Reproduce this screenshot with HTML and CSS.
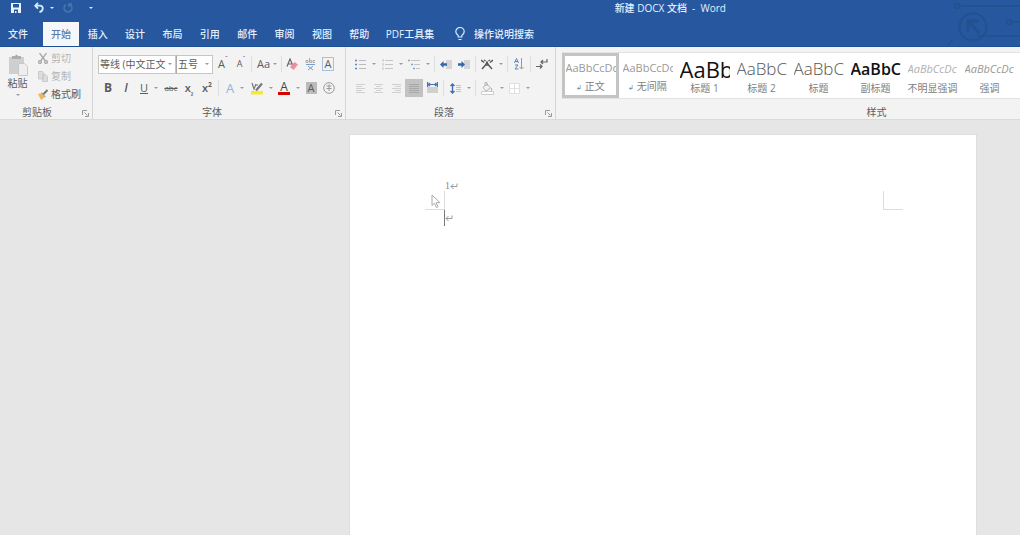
FILE: index.html
```
<!DOCTYPE html>
<html lang="zh-CN">
<head>
<meta charset="utf-8">
<title>新建 DOCX 文档 - Word</title>
<link rel="stylesheet" href="styles.css">
</head>
<body>
<div class="app">
<header class="top">
  <svg class="circuit" width="72" height="46" viewBox="0 0 72 46" fill="none" stroke="#23508e" stroke-width="1.5"><circle cx="9" cy="6" r="2.5"/><path d="M12 6h60M0 45l5-5M64 22h8M30 36h42" /><circle cx="61" cy="22" r="2.5"/><circle cx="25" cy="27" r="13.5" stroke-width="2"/><path d="M20 32V21h11M20 21l11 12" stroke-width="3"/></svg>
  <div class="titlebar">
    <div class="quick">
      <button class="qb" aria-label="保存"><svg width="10" height="10" viewBox="0 0 10 10"><path fill="#e8f4ff" fill-rule="evenodd" d="M0 0h10v10H0zM2 1v3.500h6V1zM3 6.500V10h1V8h1.500v2H7V6.500z"/></svg></button>
      <button class="qb undo" aria-label="撤消"><svg width="10" height="11" viewBox="0 0 10 11" fill="none" stroke="#d5ecff" stroke-width="1.800"><path d="M4 .8L1.200 3.700 4 6.600M1.500 3.700H6c4 0 3.500 5.500-.5 6.300"/></svg></button>
      <button class="qb narrow" aria-label="撤消选项"><i class="caret light"></i></button>
      <button class="qb redo" aria-label="重复"><svg width="10" height="10" viewBox="0 0 10 10" fill="none" stroke="#4b75b2" stroke-width="1.500"><path d="M3 1.500a4 4 0 1 0 4 0M6 4V1h3"/></svg></button>
      <button class="qb more" aria-label="自定义"><i class="caret light"></i></button>
    </div>
    <h1 class="doc-title">新建 DOCX 文档&nbsp; -&nbsp; Word</h1>
  </div>
  <nav class="tabs">
    <button class="tab file">文件</button>
    <button class="tab active">开始</button>
    <div class="tab-set">
      <button class="tab">插入</button><button class="tab">设计</button><button class="tab">布局</button><button class="tab">引用</button><button class="tab">邮件</button><button class="tab">审阅</button><button class="tab">视图</button><button class="tab">帮助</button>
    </div>
    <button class="tab pdf">PDF工具集</button>
    <button class="tab tell"><svg width="10" height="14" viewBox="0 0 10 14" fill="none" stroke="#d5ecff" stroke-width="1.200"><path d="M3.200 10V8.500C2 7.500.8 6.500.8 4.700a4.200 4.200 0 0 1 8.400 0c0 1.800-1.200 2.800-2.400 3.800V10zM3.500 12.500h3"/></svg>操作说明搜索</button>
  </nav>
</header>

<main class="ribbon">
  <section class="group clip">
    <div class="clip-body">
      <button class="paste"><svg width="20" height="22" viewBox="0 0 20 22"><path fill="#cfcfcf" d="M1 3h15v6h-6v11H1z"/><path fill="#adadad" d="M4 2h3q1.500-3 3 0h3v3H4z"/><path fill="#eee" stroke="#c8c8c8" d="M10.500 9.500h6l3 3v9h-9z"/></svg><span>粘贴</span><i class="caret"></i></button>
      <div class="clip-list">
        <button class="mini off"><svg width="10" height="11" viewBox="0 0 10 11" fill="none" stroke="#a8a8a8" stroke-width="1.300"><path d="M1.500 0l6 8M8.500 0l-6 8"/><circle cx="2" cy="9" r="1.400"/><circle cx="8" cy="9" r="1.400"/></svg>剪切</button>
        <button class="mini off"><svg width="10" height="11" viewBox="0 0 10 11" fill="#ddd" stroke="#cacaca"><path d="M.5.5h4l1 1V8h-5zM4.500 3.500h3l2 2v5h-5z"/></svg>复制</button>
        <button class="mini"><svg width="10" height="11" viewBox="0 0 10 11"><path fill="#f0b65a" d="M0 5l4-1 3 4-4 3z"/><path stroke="#777" stroke-width="2" d="M5 5.500L9.500 1"/><path stroke="#999" d="M3.500 3.500l4 4.500"/></svg>格式刷</button>
      </div>
    </div>
    <footer class="label">剪贴板<button class="launch" aria-label="剪贴板设置"><svg width="7" height="7" viewBox="0 0 7 7" fill="none" stroke="#9a9a9a"><path d="M.5 5V.5H5M2.500 2.500l3 3M6.500 3v3.500H3"/></svg></button></footer>
  </section>

  <section class="group font">
    <div class="row tight">
      <span class="combo face"><select aria-label="字体"><option>等线 (中文正文</option></select><i class="caret"></i></span>
      <span class="combo size"><select aria-label="字号"><option>五号</option></select><i class="caret"></i></span>
      <button class="b" aria-label="增大字号">A<sup>ˆ</sup></button>
      <button class="b small" aria-label="减小字号">A<sup>ˇ</sup></button>
      <i class="sep"></i>
      <button class="b wide aa">Aa<i class="caret"></i></button>
      <i class="sep"></i>
      <button class="b" aria-label="清除格式"><svg width="12" height="13" viewBox="0 0 12 13"><path d="M1 8.500L4 1l3 7M2 6h4" fill="none" stroke="#666" stroke-width="1.200"/><path fill="#ea8fa0" d="M4 9l4.500-5L12 6.500 7.500 12z"/></svg></button>
      <button class="b" aria-label="拼音指南"><svg width="11" height="13" viewBox="0 0 11 13" fill="none"><path stroke="#aaa" d="M1 2.500h2v2H1zM4.500 0v4.500h2v-2h-2M10 2.500H8v2h2"/><path stroke="#7d9cc8" d="M1 6.500h9M3 8l5 4M8 8l-5 4"/></svg></button>
      <button class="b" aria-label="字符边框"><span class="boxed">A</span></button>
    </div>
    <div class="row">
      <button class="b bold">B</button>
      <button class="b ital">I</button>
      <button class="b wide"><u>U</u><i class="caret"></i></button>
      <button class="b strike">abc</button>
      <button class="b bold2" aria-label="下标">x<sub>₂</sub></button>
      <button class="b bold2" aria-label="上标">x²</button>
      <i class="sep"></i>
      <button class="b wide glow">A<i class="caret"></i></button>
      <button class="b wide" aria-label="突出显示"><svg width="12" height="14" viewBox="0 0 12 14"><path fill="#f7e92c" d="M0 10h12v3.500H0z"/><path fill="none" stroke="#777" stroke-width="1.200" d="M1 2l2 6 2-5M4 4h3"/><path stroke="#777" stroke-width="2.200" d="M5 9.500L11 2.500"/></svg><i class="caret"></i></button>
      <button class="b wide"><span class="red">A</span><i class="caret"></i></button>
      <button class="b" aria-label="字符底纹"><span class="shade">A</span></button>
      <button class="b" aria-label="带圈字符"><svg width="12" height="12" viewBox="0 0 12 12" fill="none" stroke="#999"><circle cx="6" cy="6" r="5.300"/><path d="M3.500 4h5M3.500 6.500h5M6 2.500v6.500"/></svg></button>
    </div>
    <footer class="label">字体<button class="launch" aria-label="字体设置"><svg width="7" height="7" viewBox="0 0 7 7" fill="none" stroke="#9a9a9a"><path d="M.5 5V.5H5M2.500 2.500l3 3M6.500 3v3.500H3"/></svg></button></footer>
  </section>

  <section class="group para">
    <div class="row">
      <button class="b wide" aria-label="项目符号"><svg width="11" height="11" viewBox="0 0 11 11"><path stroke="#5b85bd" stroke-width="1.500" d="M0 1.500h2M0 5.500h2M0 9.500h2"/><path stroke="#bbb" d="M4 1.500h7M4 5.500h7M4 9.500h7"/></svg><i class="caret"></i></button>
      <button class="b wide" aria-label="编号"><svg width="11" height="11" viewBox="0 0 11 11"><path stroke="#b4c4d4" d="M1 0v3M1 4v3M1 8v3"/><path stroke="#c6c6c6" d="M3 1.500h8M3 5.500h8M3 9.500h8"/></svg><i class="caret"></i></button>
      <button class="b wide" aria-label="多级列表"><svg width="12" height="11" viewBox="0 0 12 11"><path stroke="#86a3cc" stroke-width="1.400" d="M0 1.500h2M3 5.500h2M5 9.500h2"/><path stroke="#c4c4c4" d="M3 1.500h9M6 5.500h6M8 9.500h4"/></svg><i class="caret"></i></button>
      <i class="sep"></i>
      <button class="b" aria-label="减少缩进"><svg width="12" height="11" viewBox="0 0 12 11"><path fill="#d5d5d5" d="M6 1h6v9H6z"/><path fill="#3567a8" d="M0 5.500l3.500-3.500v2.300H7v2.400H3.500V9z"/></svg></button>
      <button class="b" aria-label="增加缩进"><svg width="12" height="11" viewBox="0 0 12 11"><path fill="#d5d5d5" d="M6 1h6v9H6z"/><path fill="#3567a8" d="M7 5.500L3.500 2v2.300H0v2.400h3.500V9z"/></svg></button>
      <i class="sep"></i>
      <button class="b wide" aria-label="中文版式"><svg width="12" height="11" viewBox="0 0 12 11" fill="none" stroke="#555" stroke-width="1.400"><path d="M0 1l3 2.500M12 1L9 3.500M1 10l3.500-4L6 3l1.500 3L11 10M4.500 6h3M3 1l1.500 1M9 1L7.500 2"/></svg><i class="caret"></i></button>
      <i class="sep"></i>
      <button class="b" aria-label="排序"><svg width="10" height="12" viewBox="0 0 10 12" fill="none"><path stroke="#5b85bd" d="M.5 5L2.500.5l2 4.500M1 3.500h3M1 7h3L1 11h3.500"/><path stroke="#999" d="M7.500 0v11M5.500 9l2 2 2-2"/></svg></button>
      <i class="sep"></i>
      <button class="b" aria-label="显示编辑标记"><svg width="12" height="12" viewBox="0 0 12 12" fill="none" stroke="#666" stroke-width="1.200"><path d="M11 1v3H5M7 2L5 4l2 2M0 8.500h6M4 6.500l2 2-2 2"/></svg></button>
    </div>
    <div class="row">
      <button class="b" aria-label="左对齐"><svg width="9" height="9" viewBox="0 0 9 9"><path stroke="#d0d0d0" d="M0 .5h9M0 2.500h6M0 4.500h9M0 6.500h6M0 8.500h9"/></svg></button>
      <button class="b" aria-label="居中"><svg width="9" height="9" viewBox="0 0 9 9"><path stroke="#d0d0d0" d="M0 .5h9M2 2.500h5M0 4.500h9M2 6.500h5M0 8.500h9"/></svg></button>
      <button class="b" aria-label="右对齐"><svg width="9" height="9" viewBox="0 0 9 9"><path stroke="#d0d0d0" d="M0 .5h9M3 2.500h6M0 4.500h9M3 6.500h6M0 8.500h9"/></svg></button>
      <button class="b on" aria-label="两端对齐"><svg width="10" height="9" viewBox="0 0 10 9"><path stroke="#a8a8a8" d="M0 .5h10M0 2.500h10M0 4.500h10M0 6.500h10M0 8.500h10"/></svg></button>
      <button class="b" aria-label="分散对齐"><svg width="11" height="12" viewBox="0 0 11 12"><path fill="#d0d0d0" d="M0 5h11v6H0z"/><path stroke="#4873b0" fill="none" stroke-width="1.200" d="M.6 0v5M10.400 0v5M1 2.500h9M3 1L1.500 2.500 3 4M8 1l1.500 1.500L8 4"/></svg></button>
      <i class="sep"></i>
      <button class="b wide" aria-label="行距"><svg width="11" height="11" viewBox="0 0 11 11"><path fill="none" stroke="#3f70b0" stroke-width="1.400" d="M2.500 1v9M.5 3l2-2 2 2M.5 8l2 2 2-2"/><path stroke="#c4c4c4" d="M6 2.500h5M6 4.500h5M6 6.500h5M6 8.500h5"/></svg><i class="caret"></i></button>
      <i class="sep"></i>
      <button class="b wide" aria-label="底纹"><svg width="13" height="13" viewBox="0 0 13 13" fill="none" stroke="#b4b4b4"><path d="M2 5.500L6 2l3.500 4L5 9zM4 4V.5h2V4M10.500 6v3" /><path fill="#fff" stroke="#ccc" d="M.5 9.500h12v3H.5z"/></svg><i class="caret"></i></button>
      <button class="b wide" aria-label="边框"><svg width="11" height="11" viewBox="0 0 11 11" fill="#fff" stroke="#e0e0e0"><path d="M.5.5h10v10H.5zM5.500 0v11M0 5.500h11"/></svg><i class="caret"></i></button>
    </div>
    <footer class="label">段落<button class="launch" aria-label="段落设置"><svg width="7" height="7" viewBox="0 0 7 7" fill="none" stroke="#9a9a9a"><path d="M.5 5V.5H5M2.500 2.500l3 3M6.500 3v3.500H3"/></svg></button></footer>
  </section>

  <section class="group styles">
    <div class="gallery">
      <button class="style chosen"><span class="pv">AaBbCcDc</span><span class="nm"><small>↲</small> 正文</span></button>
      <button class="style"><span class="pv">AaBbCcDc</span><span class="nm"><small>↲</small> 无间隔</span></button>
      <button class="style"><span class="pv h1">AaBb</span><span class="nm">标题 1</span></button>
      <button class="style"><span class="pv h2">AaBbC</span><span class="nm">标题 2</span></button>
      <button class="style"><span class="pv h2">AaBbC</span><span class="nm">标题</span></button>
      <button class="style"><span class="pv sub">AaBbC</span><span class="nm">副标题</span></button>
      <button class="style"><span class="pv em faint">AaBbCcDc</span><span class="nm">不明显强调</span></button>
      <button class="style"><span class="pv em">AaBbCcDc</span><span class="nm">强调</span></button>
    </div>
    <footer class="label">样式</footer>
  </section>
</main>

<div class="desk">
  <article class="page">
    <i class="corner left"></i><i class="corner right"></i>
    <p class="line">1<svg width="8" height="7" viewBox="0 0 8 7" fill="none" stroke="#999"><path d="M7 .5v3H1M3.500 1L1 3.500 3.500 6"/></svg></p>
    <p class="line current"><svg width="8" height="7" viewBox="0 0 8 7" fill="none" stroke="#999"><path d="M7 .5v3H1M3.500 1L1 3.500 3.500 6"/></svg></p>
    <svg class="pointer" width="10" height="15" viewBox="0 0 10 15" fill="#fff" stroke="#aaa"><path d="M1 1v10.500l2.500-2.300 1.800 4.300 1.700-.8L5.200 8.700H9z"/></svg>
  </article>
</div>
</div>
</body>
</html>
```
FILE: styles.css
```
* { box-sizing: border-box; }
body {
  margin: 0;
  font: 10px/14px "Open Sans", "Noto Sans CJK SC", sans-serif;
  color: #5c5c5c;
  background: #e6e6e6;
}
button {
  margin: 0; padding: 0; border: 0;
  background: none; color: inherit; font: inherit;
  display: flex; align-items: center; justify-content: center;
  white-space: nowrap;
}
svg { display: block; flex: none; }
.app { min-height: 100vh; display: flex; flex-direction: column; overflow: hidden; }

/* Title bar and tabs */
.top { position: relative; background: #27589f; color: #e4f1ff; border-bottom: 1px solid #1c4f93; }
.circuit { position: absolute; right: 0; top: 0; }
.titlebar { display: flex; align-items: center; height: 22px; padding-bottom: 7px; }
.quick { display: flex; flex: 1; padding-left: 6px; }
.qb { width: 19px; height: 16px; }
.qb.undo { margin-left: 4px; }
.qb.narrow { width: 8px; }
.qb.redo { width: 24px; }
.qb.more { width: 22px; }
.doc-title { margin: 0 294px 0 0; font-size: 10px; font-weight: 500; line-height: 14px; }
.tabs { display: flex; height: 24px; position: relative; }
.tab { font-weight: 500; }
.file { width: 36px; }
.active { width: 36px; margin-left: 7px; background: #f6f7f9; color: #5d7ea9; }
.tab-set { width: 299px; display: grid; grid-template-columns: repeat(8, 1fr); }
.pdf { width: 64px; }
.tell { gap: 9px; margin-left: 13px; }

/* Ribbon */
.ribbon { display: flex; background: #f3f3f3; height: 73px; border-bottom: 1px solid #dadada; }
.group { flex: none; display: flex; flex-direction: column; padding-top: 7px; border-right: 1px solid #d6d6d6; }
.clip { width: 93px; }
.font { width: 253px; padding-left: 5px; }
.para { width: 210px; padding-left: 5px; }
.styles { width: 636px; padding: 5px 0 0 6px; }
.label { margin-top: auto; height: 14px; display: flex; align-items: center; justify-content: center; position: relative; }
.clip .label { padding-right: 18px; }
.font .label { padding-right: 19px; }
.para .label { padding-right: 18px; }
.launch { position: absolute; right: 3px; top: 5px; }
.caret { flex: none; width: 0; height: 0; border: 2px solid transparent; border-top-color: #999; border-bottom-width: 0; }
.caret.light { border-top-color: #d5ecff; }

.clip-body { display: flex; }
.paste { width: 35px; flex-direction: column; justify-content: flex-start; line-height: 15px; }
.paste .caret { margin-top: 3px; }
.clip-list { display: flex; flex-direction: column; align-items: flex-start; padding-left: 3px; margin-top: -5px; }
.mini { height: 18px; gap: 3px; }
.off { color: #b4b4b4; }

.row { display: flex; align-items: center; height: 20px; }
.row + .row { margin-top: 4px; }
.font .row + .row { padding-left: 1px; }
.b { width: 18px; height: 18px; flex: none; font-size: 11px; }
.wide { width: 27px; gap: 6px; padding-left: 1px; }
.aa { gap: 3px; }
.sep { flex: none; width: 1px; height: 16px; margin: 0 2px; background: #dedede; }
.tight .sep { margin: 0 1px; }
.b sup, .b sub { font-size: 7px; line-height: 8px; }
.b sup { align-self: flex-start; }
.b sub { align-self: flex-end; }
.small { font-size: 9px; }
.combo { position: relative; display: flex; align-items: center; height: 19px; border: 1px solid #c6c6c6; background: #fff; }
.combo + .combo { border-left: 1px solid #aaa; margin-right: 1px; }
.combo select { appearance: none; width: 100%; border: 0; background: none; padding: 0 0 0 1px; font: inherit; color: #5c5c5c; }
.combo .caret { position: absolute; right: 3px; }
.face { width: 78px; }
.size { width: 37px; }
.boxed { width: 12px; line-height: 12px; border: 1px solid #a9c0dd; text-align: center; }
.shade { width: 11px; line-height: 12px; background: #bbb; text-align: center; }
.bold { font-size: 12px; font-weight: 700; }
.bold2 { font-weight: 600; }
.ital { font-size: 12px; font-style: italic; font-weight: 600; }
.strike { font-size: 8px; text-decoration: line-through; }
.glow { color: #8fb3de; font-size: 13px; }
.red { width: 12px; line-height: 11px; font-size: 12px; color: #444; border-bottom: 3px solid #d80000; text-align: center; }
.on { background: #c2c2c2; }

.gallery { display: flex; height: 47px; background: #fff; border: 1px solid #e2e2e2; border-width: 1px 0; }
.style { flex: none; width: 57px; height: 45px; border: 3px solid transparent; flex-direction: column; color: #808080; }
.chosen { border-color: #c4c4c4; }
.pv { width: 50px; height: 24px; overflow: hidden; line-height: 24px; font-size: 11px; text-align: left; color: #999; }
.nm { line-height: 14px; }
.nm small { font-size: 7px; }
.h1 { font-size: 22px; color: #111; font-weight: 500; }
.h2 { font-size: 17px; font-weight: 300; color: #555; }
.sub { font-size: 16px; font-weight: 600; color: #111; }
.em { font-style: italic; }
.faint { color: #b0b0b0; }

/* Document */
.desk { flex: 1; display: flex; justify-content: center; padding: 14px 0 0 306px; background: #e6e6e6; }
.page { position: relative; flex: none; width: 628px; padding: 43px 95px 0; background: #fff; border: 1px solid #dedede; border-bottom: 0; }
.line { margin: 0 0 16px; height: 16px; display: flex; align-items: center; font: 10px/16px "Liberation Serif", serif; color: #888; }
.current { border-left: 1px solid #777; margin-left: -1px; }
.corner { position: absolute; top: 56px; width: 20px; height: 19px; border: 0 solid #dcdcdc; border-bottom-width: 1px; }
.left { left: 75px; border-right-width: 1px; }
.right { right: 73px; border-left-width: 1px; }
.pointer { position: absolute; left: 81px; top: 59px; }
```
